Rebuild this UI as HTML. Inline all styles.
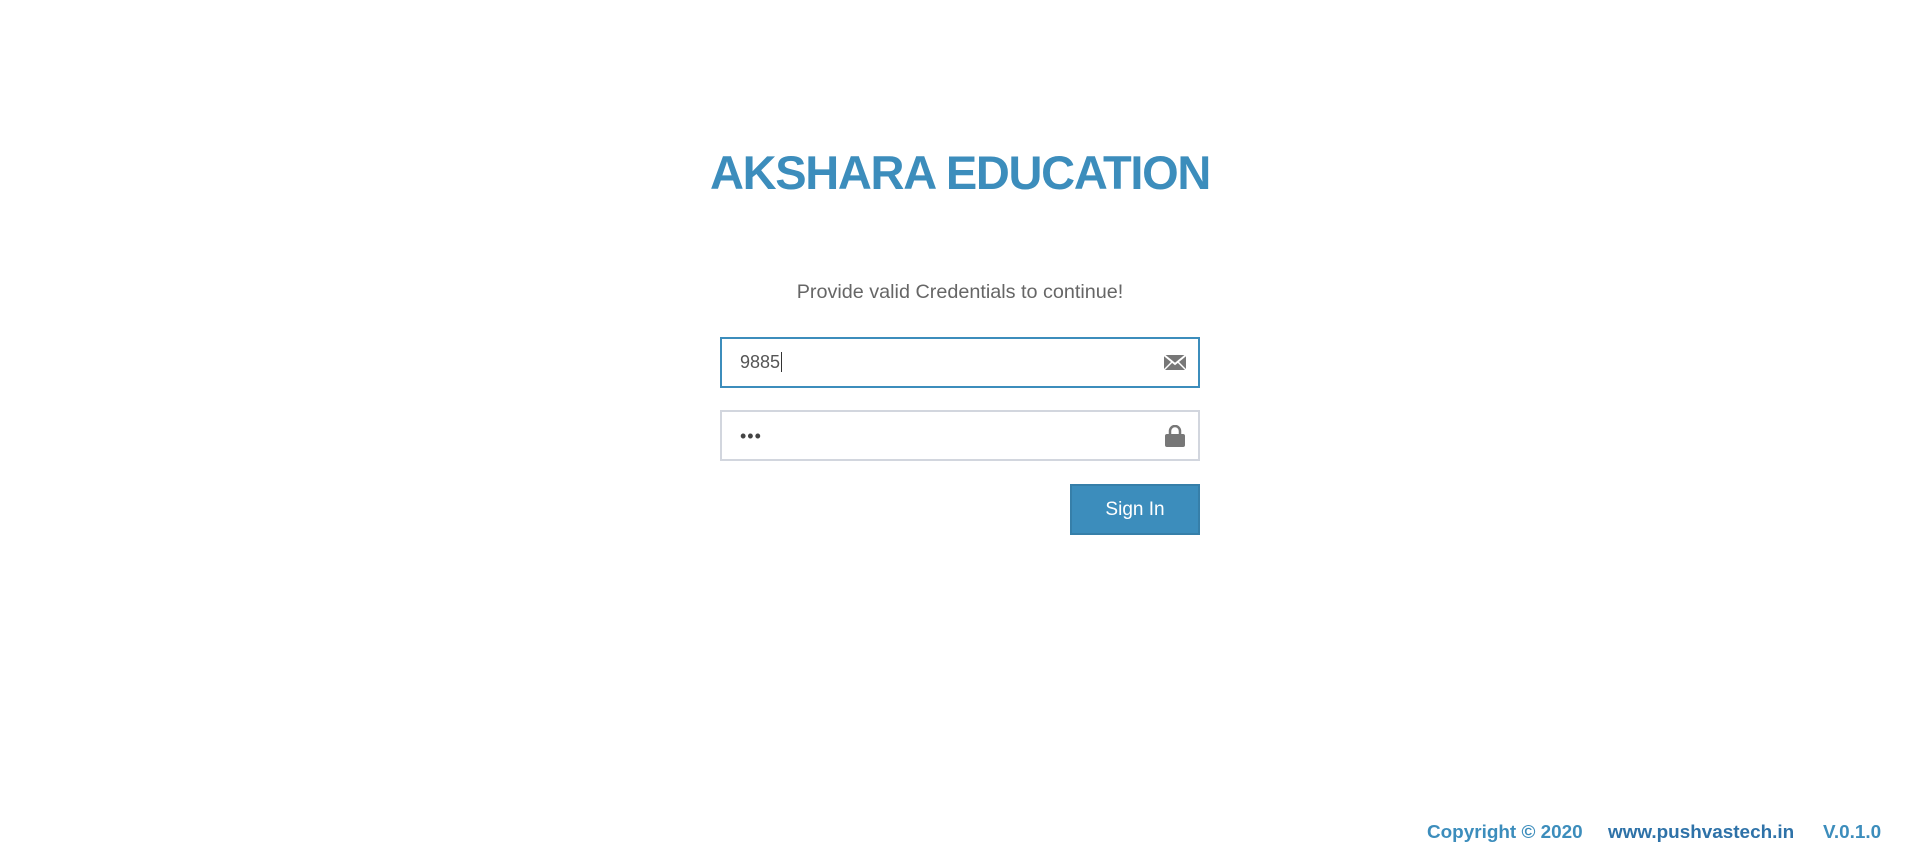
<!DOCTYPE html>
<html><head><meta charset="utf-8"><style>
html,body{margin:0;padding:0;background:#fff;width:1920px;height:849px;overflow:hidden;font-family:"Liberation Sans",sans-serif;position:relative}
.t{position:absolute;left:0;width:1920px;top:145px;text-align:center;font-weight:bold;font-size:47px;color:#3c8dbc;letter-spacing:-1.3px}
.s{position:absolute;left:0;width:1920px;top:281px;text-align:center;font-size:19.8px;color:#666}
.in{position:absolute;left:720px;width:476px;height:47px;box-sizing:content-box}
.i1{top:337px;border:2px solid #3c8dbc}
.i2{top:410px;border:2px solid #d2d6de}
.v{position:absolute;left:18px;top:13px;font-size:18px;color:#555}
.btn{position:absolute;left:1070px;top:484px;width:126px;height:47px;background:#3c8dbc;border:2px solid #367fa9;color:#fff;font-size:19px;text-align:center;line-height:47px}
.f{position:absolute;top:822px;font-weight:bold;font-size:18.9px;color:#3c8dbc}
</style></head><body>
<div class="t">AKSHARA EDUCATION</div>
<div class="s">Provide valid Credentials to continue!</div>
<div class="in i1"><span class="v">9885<span style="border-left:1px solid #333;margin-left:1px"></span></span>
<svg style="position:absolute;left:442px;top:13px" width="22" height="20" viewBox="0 0 22 20"><rect x="0" y="3" width="22" height="15" fill="#777"/><path d="M0 3 L11 12 L22 3" stroke="#fff" stroke-width="2" fill="none"/><path d="M0 18 L8 10 M22 18 L14 10" stroke="#fff" stroke-width="1.5"/></svg></div>
<div class="in i2"><span class="v" style="top:14px;letter-spacing:1px;color:#444">•••</span>
<svg style="position:absolute;left:443px;top:13px" width="20" height="22" viewBox="0 0 20 22"><path d="M5 10 V6 a5 5 0 0 1 10 0 V10" stroke="#777" stroke-width="2.5" fill="none"/><rect x="0" y="9" width="20" height="13" rx="2" fill="#777"/></svg></div>
<div class="btn">Sign In</div>
<div class="f" style="left:1427px">Copyright © 2020</div>
<div class="f" style="left:1608px;color:#2e72a8">www.pushvastech.in</div>
<div class="f" style="left:1823px">V.0.1.0</div>
</body></html>
